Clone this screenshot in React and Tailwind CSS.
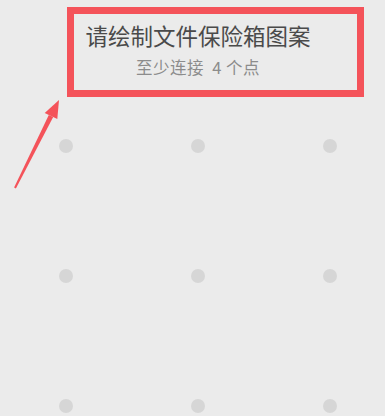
export default function App() {
  return (
    <div
      className="relative w-[385px] h-[416px] overflow-hidden bg-[#ebebeb]"
      style={{ fontFamily: '"Noto Sans CJK SC", "Noto Sans", sans-serif' }}
    >
      <div className="pt-[7px] pl-[67px]">
        <div className="w-[297px] h-[90px] border-[7px] border-[#f4535a] pr-[35px] pt-[7px] text-center">
          <div className="text-[22.5px] leading-[28px] text-[#4a4a4a]">请绘制文件保险箱图案</div>
          <div className="mt-[8px] text-[16.5px] leading-[20px] tracking-[0.5px] text-[#8c8c8c] whitespace-pre">至少连接  4 个点</div>
        </div>
      </div>

      <div className="mt-[42px] pl-[59px] flex flex-col gap-[116px]">
        {[0, 1, 2].map((r) => (
          <div key={r} className="flex gap-[118px]">
            {[0, 1, 2].map((c) => (
              <div key={c} className="w-[14px] h-[14px] rounded-full bg-[#d6d6d6]" />
            ))}
          </div>
        ))}
      </div>

      {/* annotation arrow */}
      <svg className="absolute left-0 top-0" width="80" height="200" viewBox="0 0 80 200">
        <polygon
          points="15.9,188.4 14.1,187.6 48.8,114.9 53.2,117.1"
          fill="#f4535a"
        />
        <polygon points="59,100 44.7,112.9 57.3,119.1" fill="#f4535a" />
      </svg>
    </div>
  );
}
